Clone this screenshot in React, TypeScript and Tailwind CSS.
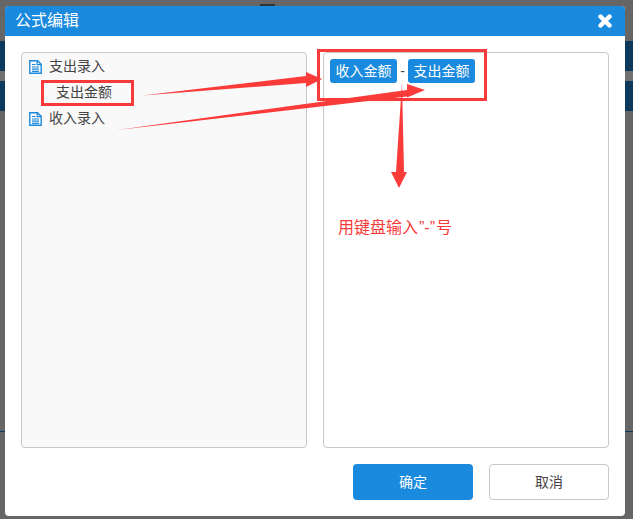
const font = "font-['Liberation_Sans','Noto_Sans_CJK_SC',sans-serif]";

function DocIcon() {
  return (
    <svg width="13" height="14" viewBox="0 0 13 14" className="mt-[1px] shrink-0">
      <path d="M.8 .8H8.5L12.2 4.2V13.2H.8Z" fill="none" stroke="#1a8ade" strokeWidth="1.4" />
      <path d="M8.2 1V4.6H12" fill="none" stroke="#1a8ade" strokeWidth="1.2" />
      <path d="M3 4.5H6.5M3 7H10M3 9.2H10M3 11.3H10" stroke="#1a8ade" strokeWidth="1.2" />
    </svg>
  );
}

function TreeRow({ label }: { label: string }) {
  return (
    <div className="flex h-[26px] items-center gap-[7px] pl-[7px] text-[14px] text-[#444]">
      <DocIcon />
      <span>{label}</span>
    </div>
  );
}

function Tag({ label }: { label: string }) {
  return (
    <span className="flex h-[24px] w-[67px] items-center justify-center rounded-[3px] bg-[#1a8ade] text-[14px] text-white">
      {label}
    </span>
  );
}

export default function App() {
  return (
    <div className={`relative h-[519px] w-[633px] overflow-hidden bg-[#666666] ${font}`}>
      {/* page behind the overlay */}
      <div className="flex flex-col pt-[41px]">
        <div className="h-[30px] bg-[#0b3a5e]" />
        <div className="h-[10px] bg-[#707070]" />
        <div className="h-[30px] bg-[#0b3a5e]" />
        <div className="mt-[320px] h-[1px] bg-[#0b3a5e]" />
      </div>
      <div className="absolute top-[4px] left-[260px] h-[2px] w-[15px] bg-[#333]" />

      {/* dialog */}
      <div className="absolute top-[6px] left-[5px] flex h-[510px] w-[620px] flex-col overflow-hidden rounded-[4px] bg-white">
        <div className="flex h-[30px] shrink-0 items-center justify-between bg-[#1a8ade] pr-[13px] pl-[10px] text-white">
          <span className="text-[16px]">公式编辑</span>
          <svg width="14" height="14" viewBox="0 0 14 14">
            <path d="M2.5 2.5L11.5 11.5M11.5 2.5L2.5 11.5" stroke="white" strokeWidth="4.4" strokeLinecap="round" />
          </svg>
        </div>

        <div className="flex gap-[16px] px-[16px] pt-[16px]">
          <div className="h-[396px] w-[286px] rounded-[4px] border border-[#c8c8c8] bg-[#f9f9f9]">
            <TreeRow label="支出录入" />
            <div className="flex h-[26px] items-center pl-[34px] text-[14px] text-[#444]">支出金额</div>
            <TreeRow label="收入录入" />
          </div>
          <div className="h-[396px] w-[286px] rounded-[4px] border border-[#c8c8c8] bg-white pt-[6px] pl-[6px]">
            <div className="flex items-center gap-[3px] text-[14px] text-[#444]">
              <Tag label="收入金额" />
              <span className="w-[5px] text-center">-</span>
              <Tag label="支出金额" />
            </div>
          </div>
        </div>

        <div className="flex justify-end gap-[16px] px-[16px] pt-[16px]">
          <button className="h-[36px] w-[120px] rounded-[4px] bg-[#1a8ade] text-[14px] text-white">确定</button>
          <button className="h-[36px] w-[120px] rounded-[4px] border border-[#c8c8c8] bg-white text-[14px] text-[#444]">取消</button>
        </div>
      </div>

      {/* annotations drawn over the screenshot */}
      <div className="absolute top-[80px] left-[41px] h-[26px] w-[93px] border-[3px] border-[#f93a3a]" />
      <div className="absolute top-[49px] left-[317px] h-[52px] w-[170px] border-[3px] border-[#f93a3a]" />
      <svg width="633" height="519" viewBox="0 0 633 519" className="absolute top-0 left-0">
        <polygon points="142,95.5 306,76 306,72 322,79 306,87 306,83" fill="#fb3a3a" />
        <polygon points="117,130 407,90 407,84 425,90 407,97.5 407,96.5" fill="#fb3a3a" />
        <polygon points="402,83 404,172 407,172 399,188 391,172 396,172" fill="#fb3a3a" />
      </svg>
      <span className="absolute top-[219px] left-[338px] text-[16px] leading-[18px] text-[#f93a3a]">
        用键盘输入<span className="mx-[1px]">”-”</span>号
      </span>
    </div>
  );
}
